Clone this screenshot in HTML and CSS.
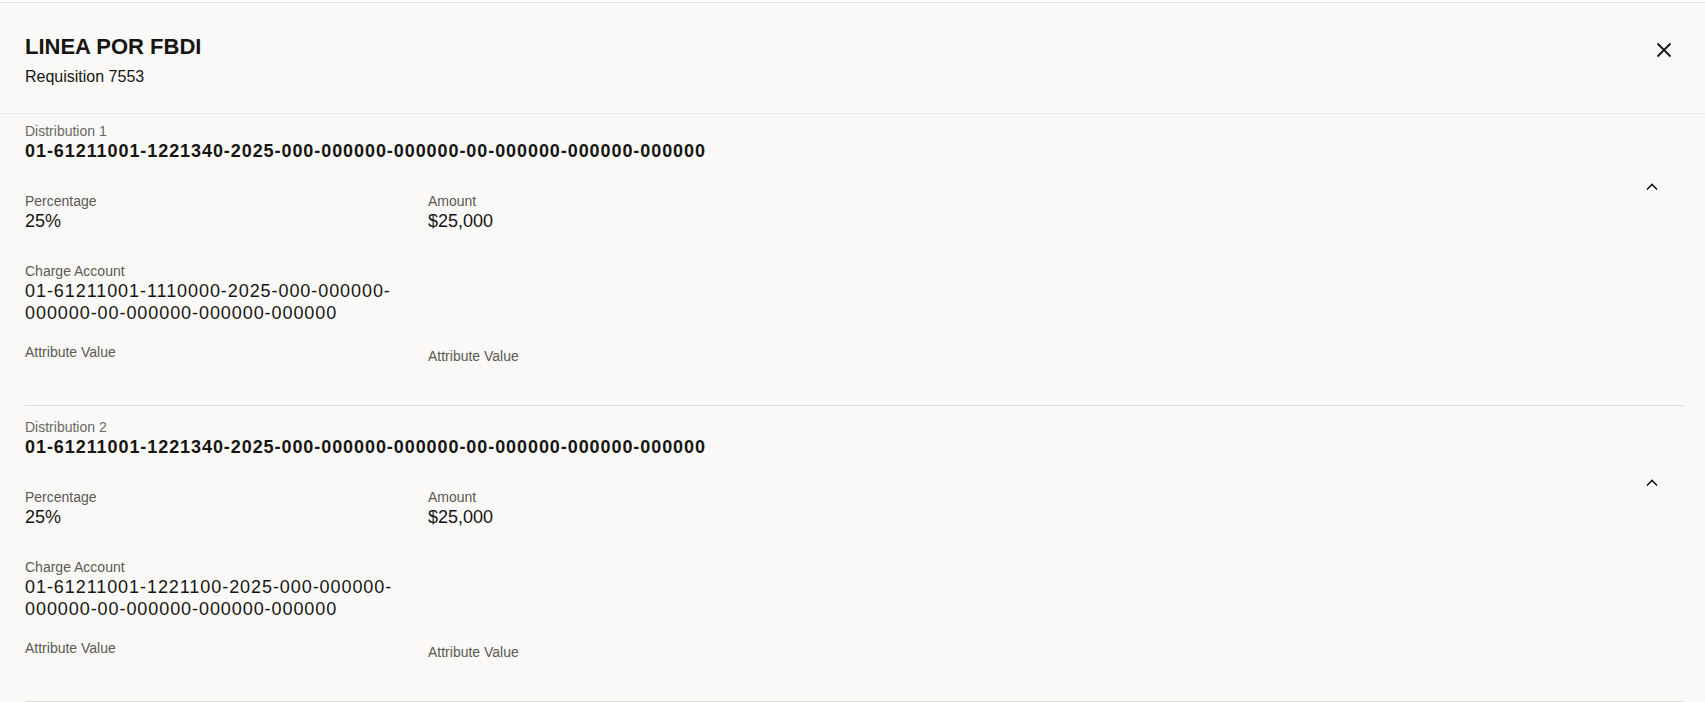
FILE: index.html
```html
<!DOCTYPE html>
<html lang="en">
<head>
    <meta charset="UTF-8">
    <meta name="viewport" content="width=device-width, initial-scale=1.0">
    <title>LINEA POR FBDI</title>
    <link rel="stylesheet" href="styles.css">
</head>
<body>
    <div class="panel">
        <div class="panel-header">
            <div class="heading">
                <h1>LINEA POR FBDI</h1>
                <div class="subtitle">Requisition 7553</div>
            </div>
            <button class="close-btn" aria-label="Close">
                <svg width="32" height="32" viewBox="0 0 32 32"><path d="M9.5 9.5 L22.5 22.5 M22.5 9.5 L9.5 22.5" fill="none" stroke="#161513" stroke-width="1.8"/></svg>
            </button>
        </div>

        <div class="distributions">
            <div class="distribution">
                <div class="dist-body">
                    <div class="dist-label">Distribution 1</div>
                    <div class="dist-account">01-61211001-1221340-2025-000-000000-000000-00-000000-000000-000000</div>
                    <div class="fields">
                        <div class="field">
                            <div class="field-label">Percentage</div>
                            <div class="field-value">25%</div>
                        </div>
                        <div class="field">
                            <div class="field-label">Amount</div>
                            <div class="field-value">$25,000</div>
                        </div>
                        <div class="field field-account">
                            <div class="field-label">Charge Account</div>
                            <div class="field-value account-value">01-<wbr>61211001-<wbr>1110000-<wbr>2025-<wbr>000-<wbr>000000-<wbr>000000-<wbr>00-<wbr>000000-<wbr>000000-<wbr>000000</div>
                        </div>
                        <div class="field field-attr">
                            <div class="field-label">Attribute Value</div>
                        </div>
                        <div class="field field-attr field-attr-right">
                            <div class="field-label">Attribute Value</div>
                        </div>
                    </div>
                </div>
                <button class="toggle-btn" aria-label="Collapse">
                    <svg width="24" height="24" viewBox="0 0 24 24"><path d="M7 14.5 L12 9.5 L17 14.5" fill="none" stroke="#161513" stroke-width="1.6"/></svg>
                </button>
            </div>

            <div class="distribution">
                <div class="dist-body">
                    <div class="dist-label">Distribution 2</div>
                    <div class="dist-account">01-61211001-1221340-2025-000-000000-000000-00-000000-000000-000000</div>
                    <div class="fields">
                        <div class="field">
                            <div class="field-label">Percentage</div>
                            <div class="field-value">25%</div>
                        </div>
                        <div class="field">
                            <div class="field-label">Amount</div>
                            <div class="field-value">$25,000</div>
                        </div>
                        <div class="field field-account">
                            <div class="field-label">Charge Account</div>
                            <div class="field-value account-value">01-<wbr>61211001-<wbr>1221100-<wbr>2025-<wbr>000-<wbr>000000-<wbr>000000-<wbr>00-<wbr>000000-<wbr>000000-<wbr>000000</div>
                        </div>
                        <div class="field field-attr">
                            <div class="field-label">Attribute Value</div>
                        </div>
                        <div class="field field-attr field-attr-right">
                            <div class="field-label">Attribute Value</div>
                        </div>
                    </div>
                </div>
                <button class="toggle-btn" aria-label="Collapse">
                    <svg width="24" height="24" viewBox="0 0 24 24"><path d="M7 14.5 L12 9.5 L17 14.5" fill="none" stroke="#161513" stroke-width="1.6"/></svg>
                </button>
            </div>
        </div>
    </div>
</body>
</html>
```

FILE: styles.css
```css
body {
    font-family: "Liberation Sans", Arial, sans-serif;
    margin: 0;
    padding-top: 2px;
    background-color: #ffffff;
    color: #161513;
}

.panel {
    background-color: #faf9f7;
    border-top: 1px solid #e3e1de;
    min-height: calc(100vh - 3px);
    overflow: hidden;
}

.panel-header {
    display: flex;
    justify-content: space-between;
    align-items: flex-start;
    padding: 30px 25px 26px 25px;
    border-bottom: 1px solid #ebe9e6;
}

h1 {
    margin: 0 0 6px 0;
    font-size: 22px;
    line-height: 28px;
    font-weight: bold;
}

.subtitle {
    font-size: 16px;
    line-height: 20px;
}

button {
    background: none;
    border: none;
    padding: 0;
    cursor: pointer;
}

.close-btn {
    width: 32px;
    height: 32px;
    margin-top: 1px;
}

.close-btn svg,
.toggle-btn svg {
    display: block;
}

.distributions {
    margin: 0 21px 0 25px;
}

.distribution {
    display: flex;
    padding: 13px 20px 0 0;
    border-bottom: 1px solid #dddbd8;
}

.distribution:first-child {
    padding-top: 9px;
}

.dist-body {
    flex: 1;
    padding-bottom: 40px;
}

.dist-label {
    font-size: 14px;
    line-height: 17px;
    color: #6a6763;
}

.dist-account {
    font-size: 18px;
    line-height: 22px;
    font-weight: bold;
    letter-spacing: 0.93px;
}

.fields {
    display: grid;
    grid-template-columns: 380px 380px;
    column-gap: 23px;
    margin-top: 30px;
}

.field {
    margin-bottom: 30px;
}

.field-account {
    grid-column: 1;
    margin-bottom: 19px;
}

.field-attr {
    grid-column: 1;
    margin-bottom: 0;
}

.field-attr-right {
    grid-column: 2;
    margin-top: 4px;
}

.field-label {
    font-size: 14px;
    line-height: 18px;
    color: #5b5854;
}

.field-value {
    font-size: 18px;
    line-height: 22px;
}

.account-value {
    letter-spacing: 0.93px;
}

.toggle-btn {
    width: 24px;
    height: 24px;
    margin-top: 52px;
}
```
